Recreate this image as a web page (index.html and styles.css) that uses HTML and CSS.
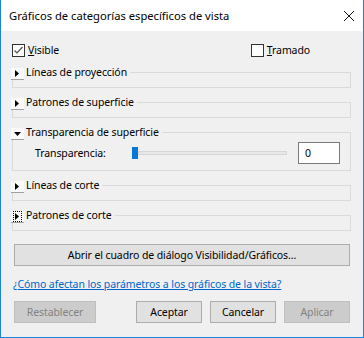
FILE: index.html
```html
<!DOCTYPE html>
<html lang="es">
<head>
<meta charset="utf-8">
<title>Gráficos de categorías específicos de vista</title>
<link rel="stylesheet" href="styles.css">
</head>
<body>
<div class="window">
  <div class="titlebar">
    <span class="title">Gráficos de categorías específicos de vista</span>
    <svg class="close" width="10" height="10" viewBox="0 0 10 10"><path d="M0 0L10 10M10 0L0 10" stroke="#111" stroke-width="1" fill="none"/></svg>
  </div>
  <div class="content">
    <div class="checks">
      <label class="check">
        <span class="box"><svg width="11" height="11" viewBox="0 0 11 11"><path d="M1.5 5.5L4 8L9.5 2" stroke="#505050" stroke-width="1.2" fill="none"/></svg></span>
        <span class="check-text"><u>V</u>isible</span>
      </label>
      <label class="check check-right">
        <span class="box"></span>
        <span class="check-text"><u>T</u>ramado</span>
      </label>
    </div>

    <fieldset class="group">
      <legend class="head"><span class="toggle"><svg width="5" height="7" viewBox="0 0 5 7"><path d="M0 0L4 3.5L0 7Z" fill="#000"/></svg></span><span class="head-label">Líneas de proyección</span></legend>
    </fieldset>

    <fieldset class="group">
      <legend class="head"><span class="toggle"><svg width="5" height="7" viewBox="0 0 5 7"><path d="M0 0L4 3.5L0 7Z" fill="#000"/></svg></span><span class="head-label">Patrones de superficie</span></legend>
    </fieldset>

    <fieldset class="group group-open">
      <legend class="head"><span class="toggle"><svg width="7" height="4" viewBox="0 0 7 4"><path d="M0 0L7 0L3.5 4Z" fill="#000"/></svg></span><span class="head-label">Transparencia de superficie</span></legend>
      <div class="trans-row">
        <span class="trans-label">Transparencia:</span>
        <div class="slider"><span class="thumb"></span><span class="track"></span></div>
        <span class="num">0</span>
      </div>
    </fieldset>

    <fieldset class="group">
      <legend class="head"><span class="toggle"><svg width="5" height="7" viewBox="0 0 5 7"><path d="M0 0L4 3.5L0 7Z" fill="#000"/></svg></span><span class="head-label">Líneas de corte</span></legend>
    </fieldset>

    <fieldset class="group">
      <legend class="head"><span class="toggle"><span class="focus"><svg width="5" height="7" viewBox="0 0 5 7"><path d="M0 0L4 3.5L0 7Z" fill="#000"/></svg></span></span><span class="head-label">Patrones de corte</span></legend>
    </fieldset>

    <button class="btn wide">Abrir el cuadro de diálogo Visibilidad/Gráficos...</button>

    <a class="link" href="#">¿Cómo afectan los parámetros a los gráficos de la vista?</a>

    <div class="actions">
      <button class="btn disabled reset">Restablecer</button>
      <div class="actions-right">
        <button class="btn act">Aceptar</button>
        <button class="btn act">Cancelar</button>
        <button class="btn act disabled">Aplicar</button>
      </div>
    </div>
  </div>
</div>
</body>
</html>
```

FILE: styles.css
```css
* { box-sizing: border-box; }
html, body { margin: 0; padding: 0; }
body {
  font-family: "Noto Sans", "Liberation Sans", sans-serif;
  font-size: 10.5px;
  letter-spacing: -0.1px;
  color: #000;
  background: #f0f0f0;
}
.window {
  width: 364px;
  height: 338px;
  border: 1px solid #1883d7;
  border-top: none;
  background: #f0f0f0;
  display: flex;
  flex-direction: column;
}
.titlebar {
  height: 31px;
  background: #fff;
  display: flex;
  align-items: center;
  justify-content: space-between;
  padding: 0 9px 0 8px;
  flex: none;
}
.title { font-size: 11.2px; line-height: 16px; letter-spacing: 0; }
.close { display: block; }

.content {
  padding: 13px 12px 0 11px;
  display: flex;
  flex-direction: column;
}

.checks {
  display: flex;
  align-items: center;
  height: 13px;
}
.check {
  display: flex;
  align-items: center;
  gap: 3px;
  line-height: 13px;
}
.check-right { margin-left: auto; margin-right: 41px; }
.box {
  width: 13px;
  height: 13px;
  border: 1px solid #333;
  background: #fff;
  display: flex;
  align-items: center;
  justify-content: center;
}
.box svg { display: block; }

.group {
  margin: 7px 0 0;
  padding: 0 0 7px 0;
  border: 1px solid #dadada;
  min-width: 0;
}
.checks + .group { margin-top: 8px; }
.head {
  display: flex;
  align-items: flex-end;
  height: 15px;
  padding: 0 3px 0 0;
  margin-left: -2px;
}
.toggle {
  width: 13px;
  height: 12px;
  background: #fbfbfb;
  border-bottom: 1px solid #a0a0a0;
  display: flex;
  align-items: center;
  justify-content: center;
  flex: none;
}
.toggle svg { display: block; }
.focus {
  outline: 1px dotted #000;
  width: 7px;
  height: 9px;
  display: flex;
  align-items: center;
  justify-content: center;
}
.head-label {
  margin-left: 2px;
  line-height: 15px;
  align-self: center;
}

.group-open { padding-bottom: 6px; }
.trans-row {
  display: flex;
  align-items: center;
  margin-top: 2px;
  padding: 0 10px 0 22px;
}
.trans-label { width: 97px; flex: none; }
.slider {
  width: 155px;
  height: 12px;
  display: flex;
  align-items: center;
  flex: none;
}
.thumb {
  width: 6px;
  height: 12px;
  background: #0078d7;
  flex: none;
}
.track {
  flex: 1;
  height: 4px;
  background: #e7e7e7;
  border: 1px solid #d6d6d6;
}
.num {
  margin-left: auto;
  width: 42px;
  height: 22px;
  border: 1px solid #7a7a7a;
  background: #fff;
  padding-left: 6px;
  line-height: 20px;
}

.btn {
  font-family: inherit;
  font-size: 10.5px;
  letter-spacing: -0.1px;
  color: #000;
  background: #e1e1e1;
  border: 1px solid #adadad;
  padding: 0;
  height: 22px;
  line-height: 18px;
}
.btn.disabled {
  background: #cccccc;
  border-color: #bfbfbf;
  color: #838383;
}
.wide {
  margin: 13px 1px 0 2px;
}
.link {
  margin-top: 11px;
  color: #0066cc;
  text-decoration: underline;
  line-height: 15px;
  align-self: flex-start;
  margin-left: 1px;
}
.actions {
  margin-top: 9px;
  display: flex;
  align-items: center;
  padding: 0 1px 0 2px;
}
.reset { width: 82px; }
.actions-right {
  margin-left: auto;
  display: flex;
  gap: 8px;
}
.act { width: 66px; }
```
